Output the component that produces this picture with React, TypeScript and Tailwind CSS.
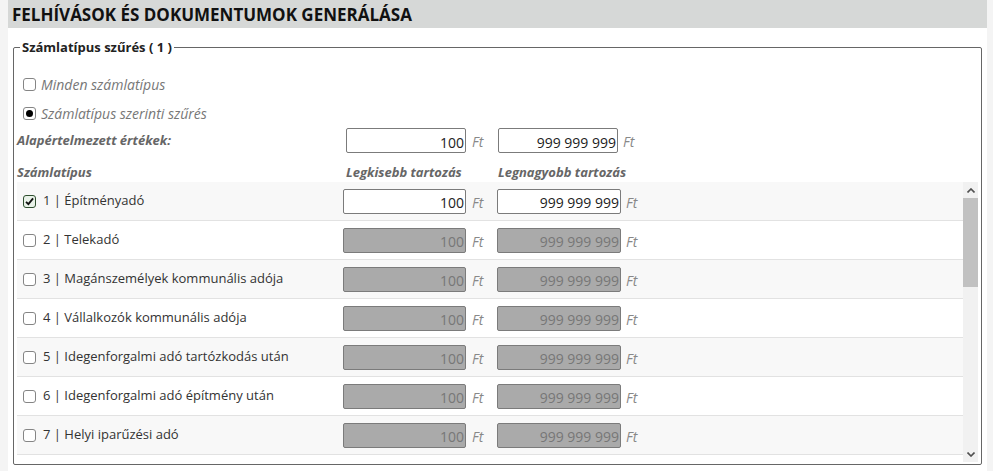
import React from 'react';

const types = [
  '1 | Építményadó',
  '2 | Telekadó',
  '3 | Magánszemélyek kommunális adója',
  '4 | Vállalkozók kommunális adója',
  '5 | Idegenforgalmi adó tartózkodás után',
  '6 | Idegenforgalmi adó építmény után',
  '7 | Helyi iparűzési adó',
];

function Box({ checked }: { checked?: boolean }) {
  return (
    <span
      className={`flex h-[13px] w-[13px] shrink-0 items-center justify-center rounded-[3px] border ${
        checked ? 'border-[#2f4f2f] bg-[#e9f2e9]' : 'border-[#858585] bg-white'
      }`}
    >
      {checked && (
        <svg viewBox="0 0 12 12" className="h-[11px] w-[11px]">
          <path d="M2.2 6.3 L4.8 8.9 L9.9 2.6" fill="none" stroke="#111" strokeWidth="2" />
        </svg>
      )}
    </span>
  );
}

function Radio() {
  return (
    <span className="flex h-[13px] w-[13px] shrink-0 items-center justify-center rounded-[3px] border border-[#858585] bg-white">
      <span className="h-[7px] w-[7px] rounded-full bg-black" />
    </span>
  );
}

function Amount({ value, disabled, w }: { value: string; disabled?: boolean; w: string }) {
  return (
    <input
      readOnly
      value={value}
      className={`${w} h-[25px] rounded-[2px] border px-[1px] pt-[3px] text-right text-[14px] outline-none ${
        disabled ? 'border-[#7b7b7b] bg-[#aaaaaa] text-[#777]' : 'border-[#7b7b7b] bg-white text-[#222]'
      }`}
    />
  );
}

function Ft({ cls = 'ml-[6px]' }: { cls?: string }) {
  return <span className={`${cls} pt-[2px] text-[14px] italic text-[#888]`}>Ft</span>;
}

export default function App() {
  return (
    <div className="min-h-[471px] bg-[#f4f4f4] font-['Open_Sans',sans-serif]">
      <div className="ml-2 mr-[6px] h-[471px] bg-white">
        <div className="flex h-[28px] items-center bg-[#d6d8d7] pl-1 pt-[1px]">
          <h1 className="text-[17px] font-bold text-[#111]">
            FELHÍVÁSOK ÉS DOKUMENTUMOK GENERÁLÁSA
          </h1>
        </div>

        <fieldset className="mx-[5px] mt-[10px] rounded-[2px] border border-[#666] px-[3px] pb-[2px]">
          <legend className="ml-[3px] px-[2px] text-[13px] leading-[18px] font-bold text-[#222]">
            Számlatípus szűrés ( 1 )
          </legend>

          <div className="mt-[18px] flex h-5 items-center gap-[5px] pl-[6px] text-[14px] italic text-[#777]">
            <Box />
            <span>Minden számlatípus</span>
          </div>
          <div className="mt-[9px] flex h-5 items-center gap-[5px] pl-[6px] text-[14px] italic text-[#777]">
            <Radio />
            <span>Számlatípus szerinti szűrés</span>
          </div>

          <div className="mt-[5px] flex h-[25px] items-center">
            <span className="w-[329px] text-[13px] font-bold italic text-[#666]">Alapértelmezett értékek:</span>
            <div className="flex w-[152px] items-center">
              <Amount value="100" w="w-[120px]" />
              <Ft />
            </div>
            <Amount value="999 999 999" w="w-[120px]" />
            <Ft cls="ml-[5px]" />
          </div>

          <div className="mt-[11px] flex h-[18px] items-center text-[13px] font-bold italic text-[#666]">
            <span className="w-[329px]">Számlatípus</span>
            <span className="w-[152px]">Legkisebb tartozás</span>
            <span>Legnagyobb tartozás</span>
          </div>

          <div className="flex h-[280px] overflow-hidden">
            <div className="flex-1">
              {types.map((t, i) => (
                <div
                  key={t}
                  className={`flex h-[39px] items-center border-b border-[#e2e2e2] ${
                    i % 2 === 0 ? 'bg-[#f8f8f8]' : 'bg-white'
                  }`}
                >
                  <div className="flex w-[326px] items-center gap-[7px] pl-[6px] text-[13px] text-[#333]">
                    <Box checked={i === 0} />
                    <span>{t}</span>
                  </div>
                  <div className="flex w-[154px] items-center">
                    <Amount value="100" disabled={i !== 0} w="w-[123px]" />
                    <Ft />
                  </div>
                  <Amount value="999 999 999" disabled={i !== 0} w="w-[124px]" />
                  <Ft cls="ml-[5px]" />
                </div>
              ))}
            </div>

            <div className="flex w-[15px] flex-col bg-[#f1f1f1]">
              <div className="flex h-[16px] items-center justify-center">
                <svg viewBox="0 0 8 5" className="h-[5px] w-[8px]">
                  <path d="M0.5 4.5 L4 1 L7.5 4.5" fill="none" stroke="#505050" strokeWidth="1.6" />
                </svg>
              </div>
              <div className="h-[89px] bg-[#c1c1c1]" />
              <div className="flex-1" />
              <div className="flex h-[16px] items-center justify-center">
                <svg viewBox="0 0 8 5" className="h-[5px] w-[8px]">
                  <path d="M0.5 0.5 L4 4 L7.5 0.5" fill="none" stroke="#505050" strokeWidth="1.6" />
                </svg>
              </div>
            </div>
          </div>
        </fieldset>
      </div>
    </div>
  );
}
